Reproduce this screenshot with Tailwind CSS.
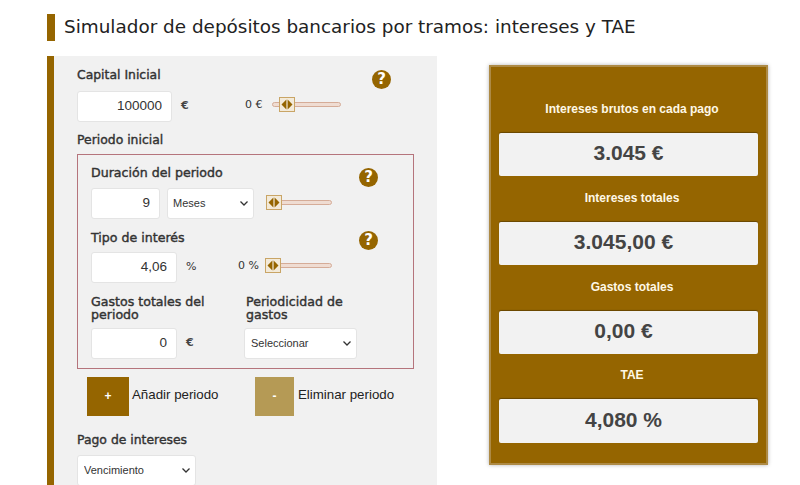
<!DOCTYPE html>
<html lang="es">
<head>
    <meta charset="UTF-8">
    <meta name="viewport" content="width=device-width, initial-scale=1.0">
    <title>Simulador de depósitos bancarios por tramos</title>
    <script src="https://cdn.jsdelivr.net/npm/@tailwindcss/browser@4"></script>
</head>
<body class="bg-white h-[485px] overflow-hidden font-['DejaVu_Sans',sans-serif] text-[#222]">

    <!-- Titulo -->
    <div class="pl-[47px] pt-[14px] h-[56px]">
        <h1 class="h-[27px] flex items-center border-l-[8px] border-[#956500] pl-[9px] text-[18.4px] leading-none text-[#222]">Simulador de depósitos bancarios por tramos: intereses y TAE</h1>
    </div>

    <div class="flex items-start pl-[47px]">

        <!-- Formulario -->
        <div class="w-[390px] h-[429px] shrink-0 bg-[#f1f1f1] border-l-[7px] border-[#956500] pl-[23px] overflow-hidden">

            <div class="flex justify-between w-[314px] h-[35px] pt-[11px]">
                <label class="text-[12.4px] leading-[16px] [-webkit-text-stroke:0.4px_#333] text-[#333]">Capital Inicial</label>
                <span class="w-[19px] h-[19px] mt-[3px] rounded-full bg-[#956500] text-white text-[15px] leading-[19px] font-bold text-center">?</span>
            </div>

            <div class="flex items-center h-[31px]">
                <input type="text" value="100000" class="w-[95px] h-[31px] bg-white rounded-[3px] border border-[#e4e4e4] text-right pr-[9px] pb-[3px] text-[13.5px] font-['Liberation_Sans',sans-serif] text-[#333]">
                <span class="ml-[9px] mb-[1px] w-[64px] text-[11px] font-bold text-[#444]">€</span>
                <span class="mb-[2px] w-[27px] text-[11px] text-[#333]">0 €</span>
                <div class="relative mb-[4px] w-[69px] h-[5px] bg-[#efdcd2] border border-[#d5ac98] rounded-full">
                    <svg class="absolute left-[6px] top-[-6px]" width="16" height="15" viewBox="0 0 16 15"><rect x="0.5" y="0.5" width="15" height="14" fill="#f3ead9" stroke="#c9a566"/><path d="M7.4 2.5 L2.5 7.5 L7.4 12.5Z M8.6 2.5 L13.5 7.5 L8.6 12.5Z" fill="#956500"/></svg>
                </div>
            </div>

            <p class="mt-[10px] h-[22px] text-[12.4px] leading-[16px] [-webkit-text-stroke:0.4px_#333] text-[#333]">Periodo inicial</p>

            <!-- Periodo -->
            <div class="w-[337px] h-[215px] border border-[#b5747c] pl-[13px]">

                <div class="flex justify-between w-[287px] h-[33px] pt-[10px]">
                    <label class="text-[12.6px] leading-[16px] [-webkit-text-stroke:0.4px_#333] text-[#333]">Duración del periodo</label>
                    <span class="w-[19px] h-[19px] mt-[3px] rounded-full bg-[#956500] text-white text-[15px] leading-[19px] font-bold text-center">?</span>
                </div>

                <div class="flex items-center h-[31px]">
                    <input type="text" value="9" class="w-[69px] h-[31px] bg-white rounded-[3px] border border-[#e4e4e4] text-right pr-[9px] pb-[3px] text-[13.5px] font-['Liberation_Sans',sans-serif] text-[#333]">
                    <div class="relative ml-[7px] w-[87px] h-[31px]">
                        <select class="appearance-none w-full h-full bg-white rounded-[3px] border border-[#e4e4e4] pl-[5px] pb-[1px] text-[11px] font-['Liberation_Sans',sans-serif] text-[#333]"><option>Meses</option></select>
                        <svg class="absolute right-[5px] top-[12px]" width="10" height="7" viewBox="0 0 10 7"><path d="M1.5 1.5 L5 5 L8.5 1.5" fill="none" stroke="#333" stroke-width="1.3"/></svg>
                    </div>
                    <div class="relative mb-[2px] ml-[12px] w-[66px] h-[5px] bg-[#efdcd2] border border-[#d5ac98] rounded-full">
                        <svg class="absolute left-[-1px] top-[-6px]" width="16" height="15" viewBox="0 0 16 15"><rect x="0.5" y="0.5" width="15" height="14" fill="#f3ead9" stroke="#c9a566"/><path d="M7.4 2.5 L2.5 7.5 L7.4 12.5Z M8.6 2.5 L13.5 7.5 L8.6 12.5Z" fill="#956500"/></svg>
                    </div>
                </div>

                <div class="flex justify-between w-[287px] h-[33px] pt-[11px]">
                    <label class="text-[12.6px] leading-[16px] [-webkit-text-stroke:0.4px_#333] text-[#333]">Tipo de interés</label>
                    <span class="w-[19px] h-[19px] mt-[1px] rounded-full bg-[#956500] text-white text-[15px] leading-[19px] font-bold text-center">?</span>
                </div>

                <div class="flex items-center h-[31px]">
                    <input type="text" value="4,06" class="w-[86px] h-[31px] bg-white rounded-[3px] border border-[#e4e4e4] text-right pr-[9px] pb-[3px] text-[13.5px] font-['Liberation_Sans',sans-serif] text-[#333]">
                    <span class="ml-[9px] mb-[1px] w-[52px] text-[11px] text-[#333]">%</span>
                    <span class="mb-[2px] w-[27px] text-[11px] text-[#333]">0 %</span>
                    <div class="relative mb-[5px] w-[67px] h-[5px] bg-[#efdcd2] border border-[#d5ac98] rounded-full">
                        <svg class="absolute left-[-1px] top-[-6px]" width="16" height="15" viewBox="0 0 16 15"><rect x="0.5" y="0.5" width="15" height="14" fill="#f3ead9" stroke="#c9a566"/><path d="M7.4 2.5 L2.5 7.5 L7.4 12.5Z M8.6 2.5 L13.5 7.5 L8.6 12.5Z" fill="#956500"/></svg>
                    </div>
                </div>

                <div class="flex h-[45px] pt-[12px]">
                    <label class="w-[155px] text-[12.6px] leading-[13px] [-webkit-text-stroke:0.4px_#333] text-[#333]">Gastos totales del<br>periodo</label>
                    <label class="text-[12.6px] leading-[13px] [-webkit-text-stroke:0.4px_#333] text-[#333]">Periodicidad de<br>gastos</label>
                </div>

                <div class="flex items-center h-[31px]">
                    <input type="text" value="0" class="w-[86px] h-[31px] bg-white rounded-[3px] border border-[#e4e4e4] text-right pr-[9px] pb-[3px] text-[13.5px] font-['Liberation_Sans',sans-serif] text-[#333]">
                    <span class="ml-[9px] mb-[1px] w-[58px] text-[11px] font-bold text-[#444]">€</span>
                    <div class="relative w-[113px] h-[31px]">
                        <select class="appearance-none w-full h-full bg-white rounded-[3px] border border-[#e4e4e4] pl-[6px] pb-[1px] text-[11px] font-['Liberation_Sans',sans-serif] text-[#333]"><option>Seleccionar</option></select>
                        <svg class="absolute right-[5px] top-[12px]" width="10" height="7" viewBox="0 0 10 7"><path d="M1.5 1.5 L5 5 L8.5 1.5" fill="none" stroke="#333" stroke-width="1.3"/></svg>
                    </div>
                </div>
            </div>

            <!-- Botones -->
            <div class="flex items-center h-[39px] mt-[8px] pl-[10px] font-['Liberation_Sans',sans-serif] text-[13.3px] text-[#222]">
                <button class="w-[42px] h-[39px] pb-[2px] bg-[#956500] text-white font-bold text-[12px]">+</button>
                <span class="ml-[3px] mb-[3px] w-[123px]">Añadir periodo</span>
                <button class="w-[39px] h-[39px] pb-[2px] bg-[#b59a55] text-white font-bold text-[12px]">-</button>
                <span class="ml-[4px] mb-[3px]">Eliminar periodo</span>
            </div>

            <p class="mt-[16px] h-[23px] text-[12.4px] leading-[16px] [-webkit-text-stroke:0.4px_#333] text-[#333]">Pago de intereses</p>

            <div class="relative w-[119px] h-[31px]">
                <select class="appearance-none w-full h-full bg-white rounded-[3px] border border-[#e4e4e4] pl-[6px] pb-[1px] text-[11px] font-['Liberation_Sans',sans-serif] text-[#333]"><option>Vencimiento</option></select>
                <svg class="absolute right-[5px] top-[12px]" width="10" height="7" viewBox="0 0 10 7"><path d="M1.5 1.5 L5 5 L8.5 1.5" fill="none" stroke="#333" stroke-width="1.3"/></svg>
            </div>
        </div>

        <!-- Resultados -->
        <div class="ml-[52px] mt-[9px] w-[279px] h-[400px] bg-[#956500] border-[2px] border-[#ad8a45] shadow-[0_0_4px_rgba(0,0,0,0.3)] px-[8px] font-['Liberation_Sans',sans-serif]">
            <p class="h-[66px] pt-[34px] text-center text-[12px] leading-[16px] font-bold text-[#fff8e6] pl-[7px]">Intereses brutos en cada pago</p>
            <div class="h-[43px] bg-[#f2f2f2] rounded-[2px] shadow-[0_-1px_1px_rgba(0,0,0,0.3)] flex items-center justify-center pb-[3px] text-[21px] font-bold text-[#444]">3.045 €</div>
            <p class="h-[46px] pt-[14px] text-center text-[12px] leading-[16px] font-bold text-[#fff8e6] pl-[7px]">Intereses totales</p>
            <div class="h-[43px] bg-[#f2f2f2] rounded-[2px] shadow-[0_-1px_1px_rgba(0,0,0,0.3)] flex items-center justify-center pr-[10px] pb-[3px] text-[21px] font-bold text-[#444]">3.045,00 €</div>
            <p class="h-[46px] pt-[14px] text-center text-[12px] leading-[16px] font-bold text-[#fff8e6] pl-[7px]">Gastos totales</p>
            <div class="h-[43px] bg-[#f2f2f2] rounded-[2px] shadow-[0_-1px_1px_rgba(0,0,0,0.3)] flex items-center justify-center pr-[10px] pb-[3px] text-[21px] font-bold text-[#444]">0,00 €</div>
            <p class="h-[45px] pt-[13px] text-center text-[12px] leading-[16px] font-bold text-[#fff8e6] pl-[7px]">TAE</p>
            <div class="h-[44px] bg-[#f2f2f2] rounded-[2px] shadow-[0_-1px_1px_rgba(0,0,0,0.3)] flex items-center justify-center pr-[10px] pb-[2px] text-[21px] font-bold text-[#444]">4,080 %</div>
        </div>
    </div>
</body>
</html>
